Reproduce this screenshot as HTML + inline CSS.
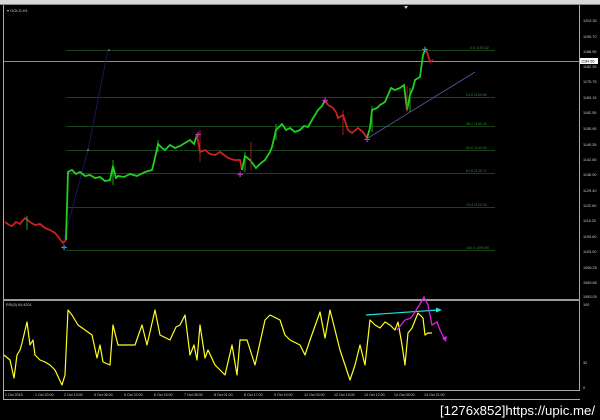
<!DOCTYPE html>
<html><head><style>
html,body{margin:0;padding:0;background:#000;width:600px;height:420px;overflow:hidden}
svg{display:block}
text{font-family:"Liberation Sans",sans-serif}
</style></head><body>
<svg width="600" height="420" viewBox="0 0 600 420" xmlns="http://www.w3.org/2000/svg">
<rect width="600" height="420" fill="#000"/>
<rect x="0" y="0" width="600" height="4" fill="#d8d8d4"/>
<rect x="0" y="4" width="600" height="1" fill="#888"/>
<line x1="3.5" y1="5" x2="3.5" y2="399" stroke="#aaa"/>
<line x1="3" y1="399.5" x2="580" y2="399.5" stroke="#aaa"/>
<line x1="579.5" y1="5" x2="579.5" y2="390" stroke="#aaa"/>
<line x1="4" y1="390.5" x2="580" y2="390.5" stroke="#aaa"/>
<rect x="4" y="299" width="576" height="2" fill="#9a9a9a"/>
<text x="7" y="12" font-size="4" fill="#ccc">▾ GOLD,H1</text>
<polygon points="404,6 408,6 406,9" fill="#ccc"/>
<g stroke="#1f5a1f" stroke-width="0.8">
<line x1="66" y1="50.5" x2="495" y2="50.5"/>
<line x1="66" y1="97.5" x2="495" y2="97.5"/>
<line x1="66" y1="126.5" x2="495" y2="126.5"/>
<line x1="66" y1="150.5" x2="495" y2="150.5"/>
<line x1="66" y1="173.5" x2="495" y2="173.5"/>
<line x1="66" y1="207.5" x2="495" y2="207.5"/>
<line x1="66" y1="250.5" x2="495" y2="250.5"/>
</g>
<g font-size="3.6" fill="#2f8a2f">
<text x="470" y="49">0.0 1193.52</text>
<text x="466" y="96">23.6 1169.80</text>
<text x="466" y="125">38.2 1155.30</text>
<text x="466" y="149">50.0 1144.50</text>
<text x="466" y="172">61.8 1126.71</text>
<text x="466" y="206">76.4 1122.04</text>
<text x="466" y="249">100.0 1099.80</text>
</g>
<line x1="4" y1="61.5" x2="579" y2="61.5" stroke="#bbb" stroke-width="0.8"/>
<polyline points="63,243 88,150 108,50" fill="none" stroke="#1c1c6a" stroke-width="0.8"/>
<circle cx="88" cy="150" r="0.8" fill="#aaf"/><circle cx="109" cy="50" r="0.8" fill="#aaf"/>
<line x1="368" y1="138" x2="475" y2="72" stroke="#5a5aa8" stroke-width="0.8"/>
<polyline fill="none" stroke="#cc2020" stroke-width="1.8" points="5,222 9,225 12,226 16,222 20,224 25,218 30,222 35,225 40,224 45,228 50,230 55,233 59,238 63,243 66,240"/>
<polyline fill="none" stroke="#20d020" stroke-width="1.8" points="66,240 68,172 72,170 76,174 80,172 85,176 90,175 95,178 100,177 105,181 110,180 113,166 116,178 118,176 124,177 130,174 137,176 145,172 152,170 155,158 158,144 162,148 165,150 170,145 175,148 180,146 185,143 190,140 194,144 197,135"/>
<polyline fill="none" stroke="#cc2020" stroke-width="1.8" points="197,135 200,152 205,150 210,154 215,155 220,152 228,158 234,160 240,160 242,170"/>
<polyline fill="none" stroke="#20d020" stroke-width="1.8" points="242,170 245,156 250,160 256,168 261,163 265,160 270,152 272,147 276,130 282,124 286,130 290,128 295,132 300,130 304,126 308,127 312,120 318,110 322,106 325,100"/>
<polyline fill="none" stroke="#cc2020" stroke-width="1.8" points="325,100 328,105 333,108 336,112 338,118 343,115 348,130 352,133 358,128 363,132 367,138"/>
<polyline fill="none" stroke="#20d020" stroke-width="1.8" points="367,138 370,128 372,110 377,108 380,105 385,102 388,95 391,88 395,90 400,88 404,85 407,110 410,95 413,88 415,80 420,77 423,55 425,50"/>
<polyline fill="none" stroke="#cc2020" stroke-width="1.8" points="425,50 427,52 430,62 433,60"/>
<g stroke="#20d020" stroke-width="0.8">
<line x1="27" y1="216" x2="27" y2="230"/><line x1="113" y1="160" x2="113" y2="185"/><line x1="158" y1="140" x2="158" y2="152"/>
<line x1="245" y1="152" x2="245" y2="172"/><line x1="276" y1="124" x2="276" y2="140"/><line x1="372" y1="106" x2="372" y2="132"/><line x1="410" y1="88" x2="410" y2="112"/>
</g>
<g stroke="#cc2020" stroke-width="0.8">
<line x1="200" y1="130" x2="200" y2="162"/><line x1="251" y1="142" x2="251" y2="170"/><line x1="407" y1="86" x2="407" y2="112"/><line x1="343" y1="110" x2="343" y2="135"/>
</g>
<g font-size="7" text-anchor="middle" font-weight="bold">
<text x="64" y="250" fill="#2aa7ff">✛</text>
<text x="425" y="52" fill="#2aa7ff">✛</text>
<text x="198" y="137" fill="#c040c0">✛</text>
<text x="240" y="177" fill="#c040c0">✛</text>
<text x="325" y="103" fill="#c040c0">✛</text>
<text x="367" y="142" fill="#c040c0">✛</text>
</g>
<g font-size="3.8" fill="#ccc">
<text x="583" y="22">1202.30</text><text x="583" y="38">1195.70</text><text x="583" y="53">1188.95</text>
<text x="583" y="68">1182.35</text><text x="583" y="83">1175.75</text><text x="583" y="99">1169.15</text>
<text x="583" y="114">1162.55</text><text x="583" y="130">1155.95</text><text x="583" y="146">1149.35</text>
<text x="583" y="161">1142.65</text><text x="583" y="176">1136.00</text><text x="583" y="192">1129.40</text>
<text x="583" y="207">1122.80</text><text x="583" y="222">1116.20</text><text x="583" y="238">1109.60</text>
<text x="583" y="253">1103.00</text><text x="583" y="269">1096.25</text><text x="583" y="284">1089.65</text>
<text x="583" y="298">1083.05</text><text x="583" y="306">100</text><text x="583" y="364">32</text><text x="583" y="389">0</text>
</g>
<rect x="580" y="58" width="18" height="6" fill="#fff"/>
<text x="581" y="62.5" font-size="3.8" fill="#000">1184.56</text>
<text x="6" y="306" font-size="3.8" fill="#ccc">RSI(5) 64.4201</text>
<polyline fill="none" stroke="#ffff20" stroke-width="1.2" stroke-linejoin="round" points="4,355 10,360 14,378 17,355 20,350 22,343 27,322 30,345 33,340 35,355 40,360 45,362 50,365 55,370 62,385 65,375 68,310 72,315 78,325 85,330 92,335 97,358 100,345 103,362 110,365 113,325 118,345 125,345 135,345 142,325 147,345 155,310 160,335 170,340 176,327 180,325 185,315 190,355 194,345 197,360 200,325 205,358 208,350 215,365 225,375 232,345 237,375 240,340 247,340 255,365 265,320 270,315 276,318 280,320 285,335 290,340 300,345 305,355 310,340 320,312 325,338 330,310 335,330 340,350 345,365 350,380 355,365 360,345 365,365 370,320 375,325 380,328 385,322 390,325 395,330 398,322 402,345 405,365 408,333 412,328 418,313 423,318 425,335 428,333 432,333"/>
<line x1="366" y1="315" x2="438" y2="310" stroke="#20e0e0" stroke-width="1.2"/>
<polygon points="442,310 436,307.5 436,312.5" fill="#20e0e0"/>
<polyline fill="none" stroke="#e020e0" stroke-width="1.3" points="397,330 405,320 411,318 415,312 420,304 424,297 428,305 432,325 437,322 440,330 445,340"/>
<polygon points="446,342 442,338 447,336" fill="#e020e0"/>
<g font-size="3.6" fill="#ccc">
<text x="5" y="396">1 Oct 2015</text><text x="35" y="396">1 Oct 20:00</text><text x="64" y="396">2 Oct 13:00</text>
<text x="94" y="396">5 Oct 06:00</text><text x="124" y="396">5 Oct 22:00</text><text x="154" y="396">6 Oct 15:00</text>
<text x="184" y="396">7 Oct 08:00</text><text x="214" y="396">8 Oct 01:00</text><text x="244" y="396">8 Oct 17:00</text>
<text x="274" y="396">9 Oct 10:00</text><text x="304" y="396">12 Oct 03:00</text><text x="334" y="396">12 Oct 19:00</text>
<text x="364" y="396">13 Oct 12:00</text><text x="394" y="396">14 Oct 05:00</text><text x="424" y="396">14 Oct 21:00</text>
</g>
<text x="440" y="415" font-size="13" fill="#fff" font-family="Liberation Mono,monospace" textLength="155" lengthAdjust="spacingAndGlyphs">[1276x852]https://upic.me/</text>
</svg>
</body></html>
